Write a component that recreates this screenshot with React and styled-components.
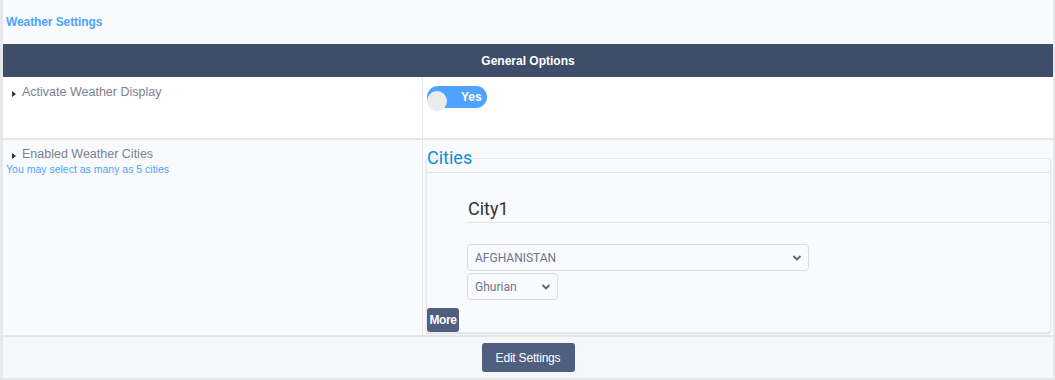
import React from "react";
import styled, { createGlobalStyle } from "styled-components";

const Global = createGlobalStyle`
  html, body { margin: 0; padding: 0; background: #ffffff; }
  body { font-family: "Liberation Sans", Arial, sans-serif; }
  * { box-sizing: border-box; }
`;

const Page = styled.div`
  width: 1055px;
  height: 380px;
  border-left: 3px solid #e6e8eb;
  border-right: 2px solid #e6e8eb;
  border-bottom: 2px solid #e6e8eb;
  display: flex;
  flex-direction: column;
  background: #f9fafc;
`;

const TitleBar = styled.div`
  height: 44px;
  padding: 15px 3px 0;
  background: #f9fafc;
`;

const Title = styled.h1`
  margin: 0;
  font-family: "Liberation Sans", Arial, sans-serif;
  font-weight: bold;
  font-size: 12px;
  letter-spacing: -0.1px;
  color: #4da3ff;
`;

const SectionHeader = styled.div`
  height: 33px;
  background: #3f4d69;
  color: #ffffff;
  display: flex;
  align-items: center;
  justify-content: center;
  font-weight: bold;
  font-size: 12px;
`;

const Row = styled.div`
  display: grid;
  grid-template-columns: 420px 1fr;
  height: ${(p) => p.$h}px;
  background: ${(p) => p.$bg};
  border-bottom: 2px solid #e4e6e9;
`;

const LabelCell = styled.div`
  border-right: 1px solid #e4e6e9;
  padding: ${(p) => p.$pt}px 0 0 3px;
`;

const ValueCell = styled.div`
  padding: ${(p) => p.$pt}px 2px 0 4px;
  display: flex;
  flex-direction: column;
  align-items: flex-start;
`;

const Label = styled.div`
  display: flex;
  align-items: flex-start;
  color: #7b8294;
  font-size: 12.5px;
  line-height: 16px;
  padding-left: 4px;
`;

const Caret = styled.span`
  width: 0;
  height: 0;
  border-top: 3.5px solid transparent;
  border-bottom: 3.5px solid transparent;
  border-left: 4px solid #333;
  margin: 7px 6px 0 2px;
`;

const Hint = styled.div`
  color: #4da3ff;
  font-size: 10.5px;
  line-height: 14px;
  padding-left: 0;
`;

const Toggle = styled.div`
  position: relative;
  width: 60px;
  height: 22px;
  margin-top: 9px;
  border-radius: 11px;
  background: #4da3ff;
  color: #fff;
  font-weight: bold;
  font-size: 12px;
  line-height: 22px;
  padding-left: 34px;
`;

const Knob = styled.span`
  position: absolute;
  left: 0;
  top: 5px;
  width: 20px;
  height: 20px;
  border-radius: 50%;
  background: #ececec;
`;

const CitiesHeading = styled.div`
  color: #0e8fd3;
  font-family: Roboto, "Liberation Sans", sans-serif;
  font-size: 18px;
  line-height: 22px;
  position: relative;
  z-index: 1;
`;

const Panel = styled.div`
  align-self: stretch;
  margin: -11px 0 0 -1px;
  height: 175px;
  border: 1px solid #e7e9ec;
  border-radius: 0 4px 4px 0;
  box-shadow: 0 1px 2px rgba(0, 0, 0, 0.12);
  display: flex;
  flex-direction: column;
  background: #f9fafc;
`;

const PanelHead = styled.div`
  height: 14px;
  border-bottom: 1px solid #e3e5e8;
`;

const PanelBody = styled.div`
  flex: 1;
  padding: 25px 0 0 40px;
  display: flex;
  flex-direction: column;
  align-items: flex-start;
`;

const CityTitle = styled.div`
  align-self: stretch;
  color: #333;
  font-family: Roboto, "Liberation Sans", sans-serif;
  font-size: 18px;
  line-height: 22px;
  padding: 0 0 2px 1px;
  border-bottom: 1px solid #e3e5e8;
  margin-bottom: 21px;
`;

const Select = styled.div`
  width: ${(p) => p.$w}px;
  height: 27px;
  margin-bottom: 2px;
  border: 1px solid #d9dce0;
  border-radius: 4px;
  background: #f9fafc;
  color: #6b7590;
  font-family: Roboto, "Liberation Sans", sans-serif;
  font-size: 12px;
  display: flex;
  align-items: center;
  justify-content: space-between;
  padding: 0 6px 0 7px;
`;

const Chevron = () => (
  <svg width="10" height="8" viewBox="0 0 10 8">
    <path d="M1.5 2 L5 5.5 L8.5 2" fill="none" stroke="#5a6480" strokeWidth="1.8" />
  </svg>
);

const Button = styled.button`
  border: none;
  border-radius: 3px;
  background: #505e80;
  color: #ffffff;
  font-family: "Liberation Sans", Arial, sans-serif;
  font-weight: ${(p) => (p.$bold ? "bold" : "normal")};
  font-size: 12px;
  letter-spacing: ${(p) => (p.$bold ? "-0.4px" : "-0.2px")};
  padding: 0;
  width: ${(p) => p.$w}px;
  height: ${(p) => p.$h}px;
  cursor: pointer;
`;

const MoreRow = styled.div`
  display: flex;
`;

const Footer = styled.div`
  flex: 1;
  display: flex;
  justify-content: center;
  align-items: flex-start;
  padding-top: 6px;
  background: #f6f7f9;
`;

export default function App() {
  return (
    <>
      <Global />
      <Page>
        <TitleBar>
          <Title>Weather Settings</Title>
        </TitleBar>
        <SectionHeader>General Options</SectionHeader>
        <Row $h={63} $bg="#ffffff">
          <LabelCell $pt={7}>
            <Label>
              <Caret />
              Activate Weather Display
            </Label>
          </LabelCell>
          <ValueCell $pt={0}>
            <Toggle>
              <Knob />
              Yes
            </Toggle>
          </ValueCell>
        </Row>
        <Row $h={197} $bg="#f9fafc">
          <LabelCell $pt={6}>
            <Label>
              <Caret />
              Enabled Weather Cities
            </Label>
            <Hint>You may select as many as 5 cities</Hint>
          </LabelCell>
          <ValueCell $pt={7}>
            <CitiesHeading>Cities</CitiesHeading>
            <Panel>
              <PanelHead />
              <PanelBody>
                <CityTitle>City1</CityTitle>
                <Select $w={342}>
                  AFGHANISTAN
                  <Chevron />
                </Select>
                <Select $w={91}>
                  Ghurian
                  <Chevron />
                </Select>
              </PanelBody>
              <MoreRow>
                <Button $bold $w={32} $h={24}>More</Button>
              </MoreRow>
            </Panel>
          </ValueCell>
        </Row>
        <Footer>
          <Button $w={93} $h={29}>Edit Settings</Button>
        </Footer>
      </Page>
    </>
  );
}
